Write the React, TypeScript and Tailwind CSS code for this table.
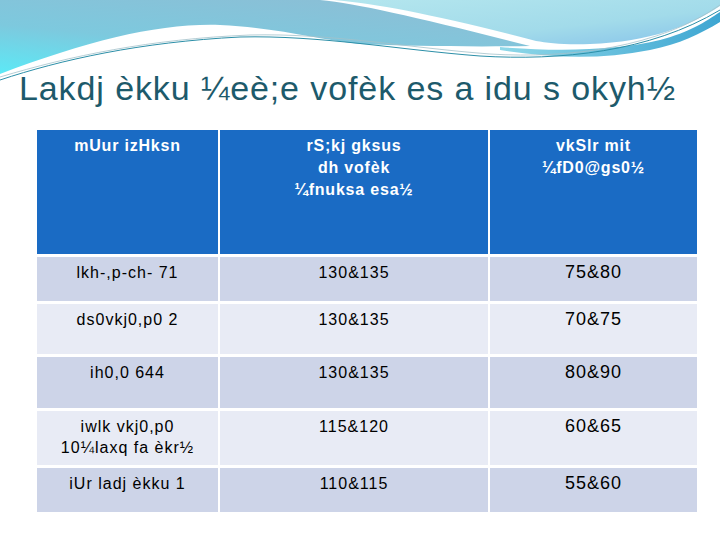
import React from "react";

const rows = [
  { name: ["lkh-,p-ch- 71"], days: "130&135", yieldQ: "75&80", h: "h-[44px]", bg: "bg-[#cdd4e8]" },
  { name: ["ds0vkj0,p0 2"], days: "130&135", yieldQ: "70&75", h: "h-[50px]", bg: "bg-[#e8ebf5]" },
  { name: ["ih0,0 644"], days: "130&135", yieldQ: "80&90", h: "h-[51px]", bg: "bg-[#cdd4e8]" },
  { name: ["iwlk vkj0,p0", "10¼laxq fa èkr½"], days: "115&120", yieldQ: "60&65", h: "h-[54px]", bg: "bg-[#e8ebf5]" },
  { name: ["iUr ladj èkku 1"], days: "110&115", yieldQ: "55&60", h: "h-[44px]", bg: "bg-[#cdd4e8]" },
];

// decorative swoosh across the top of the slide
function Wave() {
  return (
    <svg
      className="absolute left-0 top-0"
      width="720"
      height="120"
      viewBox="0 0 720 120"
      fill="none"
    >
      <defs>
        <linearGradient id="gA" x1="0.7" y1="0" x2="0" y2="1">
          <stop offset="0" stopColor="#8bbfd6" />
          <stop offset="0.55" stopColor="#7dc9de" />
          <stop offset="1" stopColor="#5ce9f6" />
        </linearGradient>
        <linearGradient id="gB" x1="0" y1="0" x2="1" y2="1">
          <stop offset="0" stopColor="#b4e6ee" />
          <stop offset="0.6" stopColor="#a2dbea" />
          <stop offset="1" stopColor="#86c2ea" />
        </linearGradient>
        <linearGradient id="gC" x1="0" y1="0" x2="1" y2="0">
          <stop offset="0" stopColor="#8fd8e8" />
          <stop offset="1" stopColor="#3ea6d2" />
        </linearGradient>
      </defs>
      <path
        d="M0,0 H320 C360,4 420,18 530,46 C470,47 410,46 360,44 C320,40 280,28 220,25 C160,23 90,40 0,74 Z"
        fill="url(#gA)"
      />
      <path
        d="M334,0 H720 V6 C690,26 650,42 590,44 C565,45 548,43 536,41 C440,16 380,4 334,0 Z"
        fill="url(#gB)"
      />
      <path
        d="M500,47 C560,52 620,50 660,40 C690,32 705,22 720,12 V22 C700,34 680,44 650,50 C600,60 550,58 500,50 Z"
        fill="url(#gC)"
      />
      <path
        d="M0,80 C60,60 140,42 240,37 C320,35 400,50 480,56 C560,61 650,52 720,10"
        stroke="#2c8fa8"
        strokeWidth="1"
      />
      <path
        d="M0,77 C70,56 150,39 250,35 C330,33 410,48 490,54 C570,59 660,47 720,5"
        stroke="#a3c2ca"
        strokeWidth="0.8"
      />
    </svg>
  );
}

export default function App() {
  return (
    <div
      className="relative h-[540px] w-[720px] overflow-hidden bg-white"
      style={{ fontFamily: '"Liberation Sans", Arial, sans-serif' }}
    >
      <Wave />
      <div className="relative">
        <h1 className="pl-[19px] pt-[72px] text-[34px] leading-[32px] tracking-[0.9px] text-[#1d5a6b]">
          Lakdj èkku ¼eè;e vofèk es a idu s okyh½
        </h1>

        <div className="ml-[37px] mt-[26px] grid w-[660px] grid-cols-[181px_268px_207px] gap-x-[2px] gap-y-[3px]">
          <div className="h-[124px] bg-[#1a6bc4] pt-[5px] text-center text-[16px] font-bold leading-[22px] tracking-[0.8px] text-white">
            mUur izHksn
          </div>
          <div className="h-[124px] bg-[#1a6bc4] pt-[5px] text-center text-[16px] font-bold leading-[22px] tracking-[0.8px] text-white">
            rS;kj gksus
            <br />
            dh vofèk
            <br />
            ¼fnuksa esa½
          </div>
          <div className="h-[124px] bg-[#1a6bc4] pt-[5px] text-center text-[16px] font-bold leading-[22px] tracking-[0.8px] text-white">
            vkSlr mit
            <br />
            ¼fD0@gs0½
          </div>

          {rows.map((r) => (
            <React.Fragment key={r.name[0]}>
              <div className={`${r.h} ${r.bg} pt-[5px] text-center text-[16px] leading-[21px] tracking-[1px] text-black`}>
                {r.name.map((n) => (
                  <div key={n}>{n}</div>
                ))}
              </div>
              <div className={`${r.h} ${r.bg} pt-[5px] text-center text-[16px] leading-[21px] tracking-[1px] text-black`}>
                {r.days}
              </div>
              <div className={`${r.h} ${r.bg} pt-[5px] text-center text-[18px] leading-[21px] tracking-[1px] text-black`}>
                {r.yieldQ}
              </div>
            </React.Fragment>
          ))}
        </div>
      </div>
    </div>
  );
}
